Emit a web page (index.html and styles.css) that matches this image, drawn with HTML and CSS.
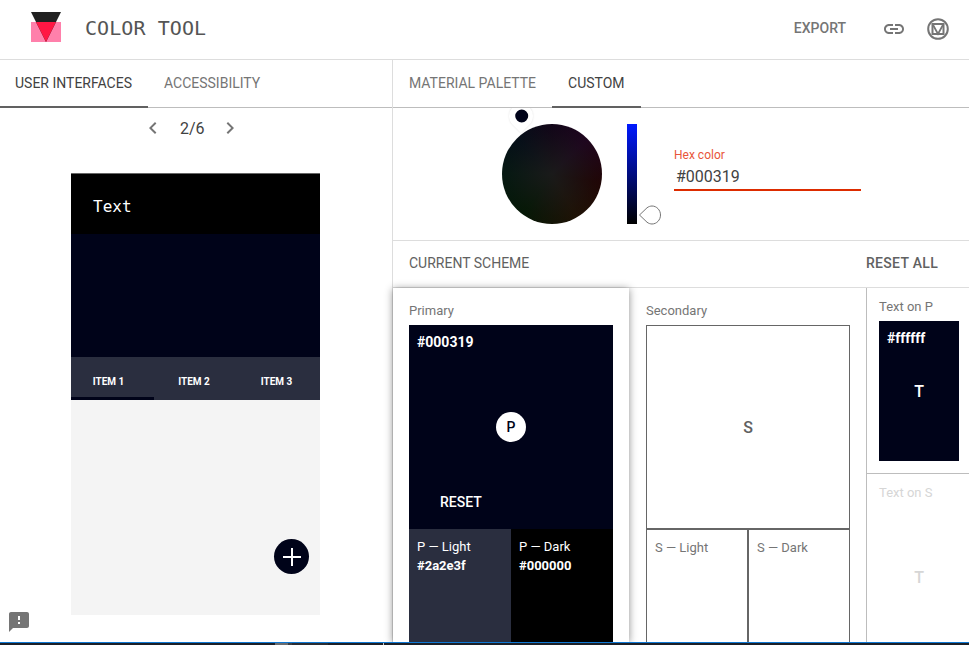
FILE: index.html
```html
<!DOCTYPE html>
<html lang="en">
<head>
    <meta charset="UTF-8">
    <title>Color Tool</title>
    <link rel="stylesheet" href="styles.css">
</head>
<body>
    <header class="topbar">
        <svg class="logo" width="30" height="30" viewBox="0 0 30 30">
            <rect x="0" y="10" width="30" height="20" fill="#ff80ab"/>
            <polygon points="0,0 30,0 15,30" fill="#212121"/>
            <polygon points="5,10 25,10 15,30" fill="#ff1744"/>
        </svg>
        <div class="title">COLOR TOOL</div>
        <div class="export">EXPORT</div>
        <svg class="link-icon" width="24" height="24" viewBox="0 0 24 24">
            <path fill="#757575" d="M3.9 12c0-1.71 1.39-3.1 3.1-3.1h4V7H7c-2.76 0-5 2.24-5 5s2.24 5 5 5h4v-1.9H7c-1.71 0-3.1-1.39-3.1-3.1zM8 13h8v-2H8v2zm9-6h-4v1.9h4c1.71 0 3.1 1.39 3.1 3.1s-1.39 3.1-3.1 3.1h-4V17h4c2.76 0 5-2.24 5-5s-2.24-5-5-5z"/>
        </svg>
        <svg class="m-icon" width="24" height="24" viewBox="0 0 24 24" fill="none" stroke="#757575">
            <circle cx="12" cy="12" r="9.800" stroke-width="2"/>
            <rect x="6.500" y="7" width="11" height="10" stroke-width="2"/>
            <path d="M6.500 7l5.500 10 5.500-10" stroke-width="1.800"/>
        </svg>
    </header>

    <main class="content">
        <section class="left">
            <nav class="tabs">
                <div class="tab active first">USER INTERFACES</div>
                <div class="tab">ACCESSIBILITY</div>
            </nav>
            <div class="pager">
                <svg width="24" height="24" viewBox="0 0 24 24"><path fill="#757575" d="M15.4 7.4L14 6l-6 6 6 6 1.4-1.4L10.8 12z"/></svg>
                <span class="pager-num">2/6</span>
                <svg width="24" height="24" viewBox="0 0 24 24"><path fill="#757575" d="M8.6 16.6L10 18l6-6-6-6-1.4 1.4L13.2 12z"/></svg>
            </div>
            <div class="phone">
                <div class="phone-bar">Text</div>
                <div class="phone-hero"></div>
                <div class="phone-tabs">
                    <div class="phone-tab selected">ITEM 1</div>
                    <div class="phone-tab second">ITEM 2</div>
                    <div class="phone-tab">ITEM 3</div>
                </div>
                <div class="phone-body">
                    <div class="fab">
                        <svg width="18" height="18" viewBox="0 0 18 18"><path fill="#fff" d="M8 0h2v8h8v2h-8v8H8v-8H0V8h8z"/></svg>
                    </div>
                </div>
            </div>
            <svg class="feedback" width="24" height="24" viewBox="0 0 24 24">
                <path fill="#757575" d="M20 2H4c-1.1 0-1.99.9-1.99 2L2 22l4-4h14c1.1 0 2-.9 2-2V4c0-1.1-.9-2-2-2zm-7 12h-2v-2h2v2zm0-4h-2V6h2v4z"/>
            </svg>
        </section>

        <section class="right">
            <nav class="tabs">
                <div class="tab">MATERIAL PALETTE</div>
                <div class="tab active">CUSTOM</div>
            </nav>
            <div class="picker">
                <div class="wheel">
                    <div class="wheel-pin"><span></span></div>
                </div>
                <div class="hue">
                    <svg class="hue-pin" width="24" height="20" viewBox="0 0 24 20">
                        <path fill="#fff" stroke="#757575" d="M1.500 10L9 2.800C10.500 1.600 12.500 1 14 1c4.600 0 8.500 4 8.500 9s-3.900 9-8.500 9c-1.500 0-3.500-.6-5-1.800z"/>
                    </svg>
                </div>
                <div class="hex">
                    <div class="hex-label">Hex color</div>
                    <div class="hex-value">#000319</div>
                </div>
            </div>
            <div class="scheme-head">
                <span>CURRENT SCHEME</span>
                <span class="reset-all">RESET ALL</span>
            </div>
            <div class="scheme">
                <div class="card">
                    <div class="label">Primary</div>
                    <div class="swatch navy">
                        <div class="code">#000319</div>
                        <div class="badge">P</div>
                        <div class="reset">RESET</div>
                    </div>
                    <div class="pair">
                        <div class="cell light">P — Light<div class="code">#2a2e3f</div></div>
                        <div class="cell black">P — Dark<div class="code">#000000</div></div>
                    </div>
                </div>
                <div class="card plain">
                    <div class="label">Secondary</div>
                    <div class="swatch outlined"><div class="letter">S</div></div>
                    <div class="pair">
                        <div class="cell outlined">S — Light</div>
                        <div class="cell outlined">S — Dark</div>
                    </div>
                </div>
                <div class="text-col">
                    <div class="text-p">
                        <div class="label">Text on P</div>
                        <div class="text-swatch">
                            <div class="code">#ffffff</div>
                            <div class="letter">T</div>
                        </div>
                    </div>
                    <div class="text-s">
                        <div class="label">Text on S</div>
                        <div class="letter">T</div>
                    </div>
                </div>
            </div>
        </section>
    </main>

    <div class="taskbar"></div>
</body>
</html>
```

FILE: styles.css
```css
* {
    margin: 0;
    padding: 0;
    box-sizing: border-box;
}

html, body {
    height: 100%;
}

body {
    display: flex;
    flex-direction: column;
    overflow: hidden;
    font-family: Roboto, "Liberation Sans", sans-serif;
    font-size: 14px;
    color: #424242;
    background: #fff;
}

/* top bar */
.topbar {
    height: 60px;
    flex: none;
    display: flex;
    align-items: center;
    padding: 0 0 2px 31px;
    border-bottom: 1px solid #ddd;
}

.logo {
    margin-top: -3px;
}

.title {
    margin: -2px 0 0 24px;
    font-family: "DejaVu Sans Mono", monospace;
    font-size: 20px;
    letter-spacing: 0.08px;
    color: #555;
}

.export {
    margin: -2px 0 0 auto;
    font-size: 14px;
    font-weight: 500;
    color: #757575;
}

.link-icon {
    margin-left: 36px;
}

.m-icon {
    margin-left: 20px;
    margin-right: 19px;
}

.content {
    flex: 1;
    min-height: 0;
    display: flex;
}

/* tabs */
.tabs {
    height: 48px;
    display: flex;
    border-bottom: 1px solid #bdbdbd;
}

.tab {
    height: 48px;
    padding: 0 16px;
    line-height: 47px;
    color: #757575;
}

.tab.first {
    padding-left: 15px;
}

.tab.active {
    color: #424242;
    border-bottom: 2px solid #616161;
}

/* left column */
.left {
    position: relative;
    width: 393px;
    flex: none;
    border-right: 1px solid #ddd;
}

.pager {
    height: 40px;
    display: flex;
    align-items: center;
    padding-left: 141px;
}

.pager-num {
    margin: 0 13px 0 15px;
    font-size: 16px;
    color: #424242;
}

.phone {
    width: 249px;
    margin: 25px 0 0 71px;
    border-top: 1px solid #666;
}

.phone-bar {
    height: 60px;
    padding-left: 22px;
    background: #000;
    color: #fff;
    font-family: "DejaVu Sans Mono", monospace;
    font-size: 16px;
    line-height: 65px;
}

.phone-hero {
    height: 123px;
    background: #000319;
}

.phone-tabs {
    height: 43px;
    display: flex;
    background: #2a2e3f;
}

.phone-tab {
    width: 83px;
    flex: none;
    padding-right: 4px;
    text-align: center;
    line-height: 50px;
    font-size: 10px;
    font-weight: 700;
    color: #fff;
}

.phone-tab.selected {
    padding-right: 8px;
    border-bottom: 3px solid #000319;
}

.phone-tab.second {
    padding-right: 3px;
}

.phone-body {
    height: 215px;
    display: flex;
    justify-content: flex-end;
    align-items: flex-start;
    padding: 139px 11px 0 0;
    background: #f4f4f4;
}

.fab {
    width: 35px;
    height: 35px;
    display: flex;
    align-items: center;
    justify-content: center;
    border-radius: 50%;
    background: #000319;
}

.feedback {
    position: absolute;
    left: 7px;
    bottom: 8px;
}

/* right column */
.right {
    flex: 1;
    min-width: 0;
}

.picker {
    height: 133px;
    display: flex;
    overflow: hidden;
    padding: 16px 0 0 109px;
    border-bottom: 1px solid #ddd;
}

.wheel {
    position: relative;
    width: 100px;
    height: 100px;
    border-radius: 50%;
    background:
        radial-gradient(circle, #1a1a1a 0%, rgba(26, 26, 26, 0.3) 60%, rgba(26, 26, 26, 0) 100%),
        conic-gradient(#100018, #200020 45deg, #220000 100deg, #201000 150deg, #0a1400 195deg, #001800 215deg, #001810 270deg, #000c18 315deg, #100018);
}

.wheel-pin {
    position: absolute;
    left: 7px;
    top: -20px;
    width: 24px;
    height: 24px;
    display: flex;
    align-items: center;
    justify-content: center;
    border-radius: 50% 50% 50% 0;
    transform: rotate(-45deg);
    background: #fff;
    box-shadow: 0 0 2px rgba(0, 0, 0, 0.12);
}

.wheel-pin span {
    width: 13px;
    height: 13px;
    border-radius: 50%;
    background: #000319;
}

.hue {
    position: relative;
    width: 10px;
    height: 100px;
    margin-left: 25px;
    background: linear-gradient(#0019ff, #000);
}

.hue-pin {
    position: absolute;
    left: 11px;
    bottom: -1px;
}

.hex {
    width: 187px;
    height: 43px;
    margin: 24px 0 0 37px;
    border-bottom: 2px solid #dd2c00;
}

.hex-label {
    font-size: 12px;
    line-height: 14px;
    color: #e8553a;
}

.hex-value {
    padding-left: 2px;
    margin-top: 5px;
    font-size: 16px;
    line-height: 20px;
    color: #424242;
}

.scheme-head {
    height: 47px;
    display: flex;
    justify-content: space-between;
    align-items: center;
    padding: 0 31px 2px 16px;
    border-bottom: 1px solid #ddd;
    font-size: 14px;
    color: #616161;
}

.reset-all {
    font-weight: 500;
    letter-spacing: 0.3px;
}

/* scheme panels */
.scheme {
    display: flex;
    height: 354px;
}

.card {
    position: relative;
    width: 236px;
    flex: none;
    padding: 16px 16px 0;
    background: #fff;
    box-shadow: 0 1px 8px rgba(0, 0, 0, 0.45);
}

.card.plain {
    position: static;
    width: 237px;
    padding-left: 17px;
    background: none;
    box-shadow: none;
}

.label {
    height: 21px;
    font-size: 13px;
    line-height: 14px;
    color: #757575;
}

.swatch {
    position: relative;
    width: 204px;
    height: 204px;
    display: flex;
    align-items: center;
    justify-content: center;
}

.navy {
    background: #000319;
    color: #fff;
}

.outlined {
    border: 1px solid #666;
}

.code {
    font-size: 13px;
    font-weight: 700;
    color: #fff;
}

.swatch .code {
    position: absolute;
    left: 8px;
    top: 9px;
    font-size: 14px;
}

.badge {
    width: 30px;
    height: 30px;
    border-radius: 50%;
    background: #fff;
    color: #000319;
    text-align: center;
    line-height: 30px;
    font-size: 14px;
    font-weight: 500;
}

.reset {
    position: absolute;
    left: 31px;
    bottom: 19px;
    font-size: 14px;
    font-weight: 500;
}

.letter {
    font-size: 16px;
    font-weight: 500;
    color: #616161;
}

/* the cells run on below the fold, the taskbar cuts them off */
.pair {
    display: flex;
    width: 204px;
    height: 113px;
}

.cell {
    width: 102px;
    height: 130px;
    flex: none;
    padding: 8px;
    font-size: 13px;
    line-height: 19px;
}

.cell.outlined {
    color: #757575;
}

.light {
    background: #2a2e3f;
    color: #fff;
}

.black {
    background: #000;
    color: #fff;
}

.text-col {
    flex: 1;
    min-width: 0;
    border-left: 1px solid #bdbdbd;
}

.text-p {
    height: 186px;
    padding: 12px 0 0 12px;
    border-bottom: 1px solid #bdbdbd;
}

.text-swatch {
    width: 80px;
    height: 140px;
    padding: 9px 8px;
    background: #000319;
    text-align: center;
}

.text-swatch .code {
    font-size: 14px;
    text-align: left;
}

.text-swatch .letter {
    margin-top: 36px;
    color: #fff;
}

.text-s {
    padding: 12px 0 0 12px;
}

.text-s .label {
    color: #d6d6d6;
}

.text-s .letter {
    width: 80px;
    margin-top: 61px;
    text-align: center;
    color: #d6d6d6;
}

.taskbar {
    position: relative;
    z-index: 2;
    height: 3px;
    flex: none;
    border-top: 1px solid #0f78d4;
    background: linear-gradient(90deg, #1c2027 275px, #6a6d70 275px, #6a6d70 288px, #3a3d42 288px, #3a3d42 292px, #2a2d33 292px, #2a2d33 328px, #1c2027 328px, #1c2027 383px, #c8c8c8 383px, #c8c8c8 384px, #1c2027 384px);
}
```
